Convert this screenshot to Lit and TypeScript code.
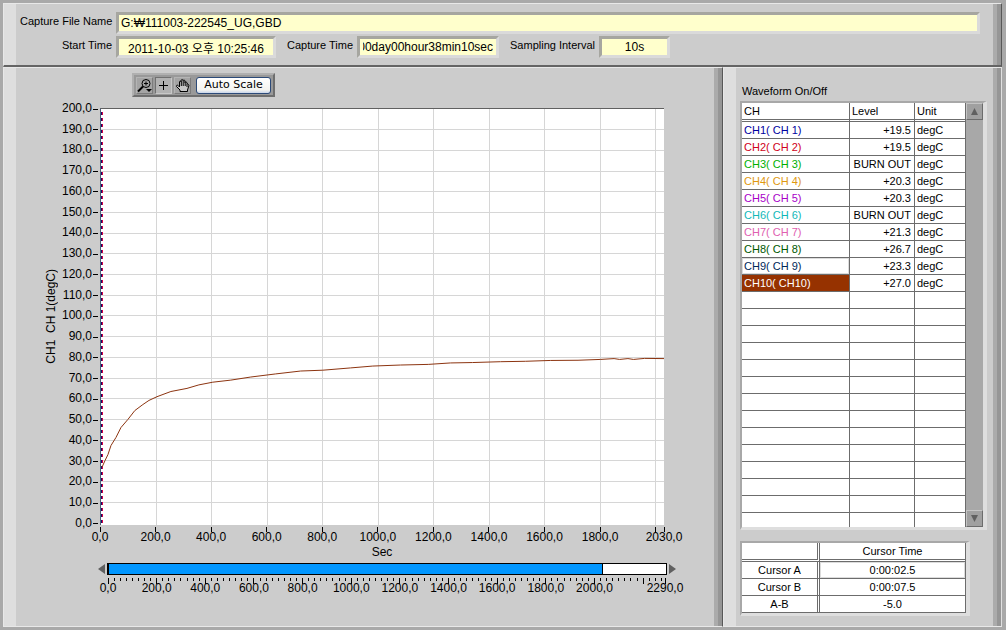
import { LitElement, html, svg, css } from "lit";
import { customElement, property, state } from "lit/decorators.js";

interface Channel {
  name: string;
  level: string;
  unit: string;
  color: string;
}

const CHANNELS: Channel[] = [
  { name: "CH1( CH 1)", level: "+19.5", unit: "degC", color: "#0000a0" },
  { name: "CH2( CH 2)", level: "+19.5", unit: "degC", color: "#d00020" },
  { name: "CH3( CH 3)", level: "BURN OUT", unit: "degC", color: "#00b000" },
  { name: "CH4( CH 4)", level: "+20.3", unit: "degC", color: "#e09810" },
  { name: "CH5( CH 5)", level: "+20.3", unit: "degC", color: "#a800c8" },
  { name: "CH6( CH 6)", level: "BURN OUT", unit: "degC", color: "#10b8b8" },
  { name: "CH7( CH 7)", level: "+21.3", unit: "degC", color: "#e060b0" },
  { name: "CH8( CH 8)", level: "+26.7", unit: "degC", color: "#005800" },
  { name: "CH9( CH 9)", level: "+23.3", unit: "degC", color: "#002858" },
  { name: "CH10( CH10)", level: "+27.0", unit: "degC", color: "#ffffff" },
];

const TEMPERATURE: [number, number][] = [
  [4, 27], [14, 30], [25, 33], [36, 37.4], [54, 41.3], [72, 46.1], [97, 50],
  [122, 54.3], [151, 57.2], [173, 59.2], [202, 61], [252, 63.5], [310, 65],
  [353, 66.7], [403, 68], [468, 69], [540, 70.5], [630, 72], [720, 73.4],
  [800, 73.8], [900, 74.9], [980, 75.8], [1080, 76.3], [1180, 76.6],
  [1260, 77.3], [1340, 77.5], [1440, 77.9], [1530, 78.1], [1620, 78.5],
  [1720, 78.6], [1800, 79], [1850, 79.4], [1870, 79], [1900, 79.4],
  [1920, 79], [1960, 79.5], [2030, 79.4],
];

const VIEW_END = 2030;
const RECORD_END = 2290;
const Y_MIN = -1;
const Y_MAX = 200;

const fmt = (n: number) => `${n},0`;
const range = (from: number, to: number, step: number) => {
  const out: number[] = [];
  for (let v = from; v <= to; v += step) out.push(v);
  return out;
};
const xPct = (sec: number, end: number) => `${(sec / end) * 100}%`;
const yPct = (v: number) => `${((Y_MAX - v) / (Y_MAX - Y_MIN)) * 100}%`;

@customElement("capture-header")
class CaptureHeader extends LitElement {
  static styles = css`
    :host {
      display: block;
      padding: 7px 13px 6px 4px;
    }
    .row {
      display: flex;
      align-items: center;
      height: 24px;
    }
    label {
      font-size: 11px;
      white-space: nowrap;
      margin-right: 4px;
      padding-bottom: 4px;
    }
    .lead {
      width: 92px;
      text-align: right;
    }
    .gap {
      margin-left: 11px;
    }
    input {
      box-sizing: border-box;
      min-width: 0;
      height: 22px;
      border: 3px solid;
      border-color: #a6a6a0 #dadada #dadada #a6a6a0;
      background: #ffffcc;
      font: 12px "Liberation Sans", "Noto Sans CJK KR", sans-serif;
      color: #000;
      padding: 0 2px;
      outline: none;
    }
    .file {
      flex: 1;
    }
    .start {
      width: 160px;
      text-align: center;
    }
    .span {
      width: 142px;
      padding: 0 3px;
      direction: rtl;
    }
    .interval {
      width: 71px;
      text-align: center;
    }
  `;

  render() {
    return html`
      <div class="row">
        <label class="lead" for="file">Capture File Name</label>
        <input class="file" id="file" readonly value="G:₩111003-222545_UG,GBD" />
      </div>
      <div class="row">
        <label class="lead" for="start">Start Time</label>
        <input class="start" id="start" readonly value="2011-10-03 오후 10:25:46" />
        <label class="gap" for="span">Capture Time</label>
        <input class="span" id="span" readonly value="00day00hour38min10sec" />
        <label class="gap" for="interval">Sampling Interval</label>
        <input class="interval" id="interval" readonly value="10s" />
      </div>
    `;
  }
}

@customElement("graph-toolbar")
class GraphToolbar extends LitElement {
  static styles = css`
    :host {
      display: flex;
      align-items: center;
      gap: 2px;
      height: 20px;
      padding: 0 2px;
      background: #999;
      border: 2px solid;
      border-color: #b0b0b0 #6e6e6e #6e6e6e #b0b0b0;
    }
    .tool {
      box-sizing: border-box;
      width: 17px;
      height: 17px;
      padding: 0;
      border: 1px solid;
      border-color: #b4b4b4 #7c7c7c #7c7c7c #b4b4b4;
      background: #a4a4a4;
    }
    .pressed {
      border-color: #707070 #c8c8c8 #c8c8c8 #707070;
      background: #b2b2b2;
    }
    .tool svg {
      display: block;
      width: 15px;
      height: 15px;
    }
    .scale {
      box-sizing: border-box;
      width: 75px;
      height: 17px;
      margin-left: 3px;
      padding: 0;
      border: 1px solid #2c4a78;
      border-radius: 3px;
      background: linear-gradient(#fff, #f4f4f0 80%, #c8d4e8);
      font: 11px/14px "DejaVu Sans", sans-serif;
      color: #000;
      white-space: nowrap;
    }
  `;

  render() {
    return html`
      <button class="tool" aria-label="Zoom">
        <svg viewBox="0 0 15 15" fill="none" stroke="#000">
          <circle cx="9" cy="5.5" r="4" />
          <path d="M7 5.5h4M9 3.5v4" />
          <path d="M6 8.5L1 13.5" stroke-width="2" />
          <path d="M9 11h6l-3 3z" fill="#000" stroke="none" />
        </svg>
      </button>
      <button class="tool pressed" aria-label="Cursor">
        <svg viewBox="0 0 15 15" stroke="#000"><path d="M3 7.5h9M7.5 3v9" /></svg>
      </button>
      <button class="tool" aria-label="Pan">
        <svg viewBox="0 0 15 15" fill="#c8c8c8" stroke="#000" stroke-linejoin="round">
          <path
            d="M5 13.5V12L1.5 8.5c-.4-1.200.8-1.700 1.600-1L4.500 9V4c0-1.200 1.600-1.200 1.700 0V2.500c0-1.300 1.800-1.300 1.800 0V2.800c.2-1.200 1.900-1.100 1.900.2V4.500c.3-1.200 1.900-1 1.900.3L13 6.500c.6 0 1 .4.900 1.200L12.500 12v1.500z"
          />
          <path d="M6.300 4v4M8.200 3v5M10.200 4v4M12 5.500V9" fill="none" />
        </svg>
      </button>
      <button class="scale">Auto Scale</button>
    `;
  }
}

@customElement("wave-graph")
class WaveGraph extends LitElement {
  @state() private position = 2030;

  static styles = css`
    :host {
      flex: 1;
      display: grid;
      grid-template-columns: 17px 39px 1fr;
      grid-template-rows: minmax(200px, 1fr) 20px 16px 16px 20px;
      min-height: 0;
    }
    svg {
      display: block;
      width: 100%;
      height: 100%;
      overflow: visible;
    }
    text {
      font: 12px "Liberation Sans", sans-serif;
      fill: #000;
    }
    .mid {
      text-anchor: middle;
    }
    .end {
      text-anchor: end;
    }
    .tick {
      stroke: #000;
      shape-rendering: crispEdges;
    }
    .title {
      writing-mode: vertical-rl;
      transform: rotate(180deg);
      align-self: center;
      font-size: 12px;
      line-height: 14px;
      white-space: pre;
    }
    .plot {
      box-sizing: border-box;
      min-height: 0;
      background: #fff;
      border-top: 1px solid #606060;
      border-left: 1px solid #506078;
    }
    .line {
      stroke: #d6d6d6;
      shape-rendering: crispEdges;
    }
    .wave {
      fill: none;
      stroke: #8c3410;
      vector-effect: non-scaling-stroke;
    }
    .cursor {
      stroke-dasharray: 3 3;
    }
    .a {
      stroke: #d80040;
    }
    .b {
      stroke: #180868;
    }
    .x,
    .unit,
    .scale {
      grid-column: 3;
    }
    .unit {
      text-align: center;
      font-size: 12px;
      line-height: 15px;
    }
    .slider {
      grid-column: 3;
      display: flex;
      align-items: center;
      justify-content: center;
      margin: 0 -12px 0 -2px;
      gap: 2px;
    }
    .arrow {
      flex: none;
      width: 7px;
      height: 10px;
      padding: 0;
      border: 0;
      background: none;
    }
    input {
      flex: 1;
      min-width: 0;
      appearance: none;
      box-sizing: border-box;
      height: 12px;
      margin: 0;
      border: 1px solid #000;
      border-left-width: 2px;
      background-color: #fff;
      background-image: linear-gradient(#0096ff, #0096ff);
      background-repeat: no-repeat;
    }
    input::-webkit-slider-thumb {
      appearance: none;
      width: 1px;
      height: 10px;
      background: #000;
    }
    .scale {
      margin: 0 -1px 0 8px;
    }
  `;

  render() {
    const temps = range(0, 200, 10);
    const secs = range(0, 2000, 200);
    const points = TEMPERATURE.map(([s, t]) => `${s},${Y_MAX - t}`).join(" ");
    return html`
      <div class="title">CH1  CH 1(degC)</div>
      <svg aria-label="Temperature scale">
        ${temps.map(
          (t) => svg`
            <svg y=${yPct(t)} overflow="visible">
              <line class="tick" x1="32" x2="37" y1="1" y2="1"></line>
              <text class="end" x="31" y="4">${fmt(t)}</text>
            </svg>`,
        )}
      </svg>
      <div class="plot">
        <svg>
          ${secs.slice(1).map(
            (s) => svg`<line class="line" x1=${xPct(s, VIEW_END)} x2=${xPct(s, VIEW_END)} y1="0" y2="100%"></line>`,
          )}
          ${temps.slice(1, -1).map(
            (t) => svg`<line class="line" x1="0" x2="100%" y1=${yPct(t)} y2=${yPct(t)}></line>`,
          )}
          <line class="cursor b" x1="0.5" x2="0.5" y1="3" y2="100%"></line>
          <line class="cursor a" x1="1.5" x2="1.5" y1="3" y2="100%"></line>
          <svg viewBox="0 0 ${VIEW_END} ${Y_MAX - Y_MIN}" preserveAspectRatio="none">
            <polyline class="wave" points=${points}></polyline>
          </svg>
        </svg>
      </div>
      <div class="x">
        <svg>
          ${[...secs, VIEW_END].map(
            (s) => svg`
              <line class="tick" x1=${xPct(s, VIEW_END)} x2=${xPct(s, VIEW_END)} y1="2" y2="7"></line>
              ${s === 2000 ? null : svg`<text class="mid" x=${xPct(s, VIEW_END)} y="16">${fmt(s)}</text>`}`,
          )}
        </svg>
      </div>
      <div class="unit">Sec</div>
      <div class="slider">
        <button class="arrow" aria-label="Scroll left" @click=${() => this.move(-10)}>
          <svg viewBox="0 0 7 10"><path d="M7 0v10L0 5z" fill="#606060" /></svg>
        </button>
        <input
          type="range"
          aria-label="Display position"
          min="0"
          max=${RECORD_END}
          .value=${String(this.position)}
          style="background-size:${(this.position / RECORD_END) * 100}% 100%"
          @input=${(e: Event) => (this.position = Number((e.target as HTMLInputElement).value))}
        />
        <button class="arrow" aria-label="Scroll right" @click=${() => this.move(10)}>
          <svg viewBox="0 0 7 10"><path d="M0 0v10l7-5z" fill="#606060" /></svg>
        </button>
      </div>
      <div class="scale">
        <svg>
          ${[...range(0, RECORD_END, 25), RECORD_END].map((s) => {
            const major = s % 200 === 0 || s === RECORD_END;
            return svg`
              <line class="tick" x1=${xPct(s, RECORD_END)} x2=${xPct(s, RECORD_END)} y1="1" y2=${major ? 7 : 4}></line>
              ${major && s !== 2200
                ? svg`<text class="mid" x=${xPct(s, RECORD_END)} y="15">${fmt(s)}</text>`
                : null}`;
          })}
        </svg>
      </div>
    `;
  }

  private move(step: number) {
    this.position = Math.min(RECORD_END, Math.max(0, this.position + step));
  }
}

@customElement("channel-table")
class ChannelTable extends LitElement {
  @property({ attribute: false }) channels: Channel[] = [];
  @state() private selected = 9;

  static styles = css`
    :host {
      flex: 1;
      display: flex;
      min-height: 0;
      border: 2px solid;
      border-color: #a8a8a8 #dedede #dedede #a8a8a8;
      border-right-width: 4px;
      border-bottom-width: 3px;
    }
    .rows {
      flex: 1;
      overflow: hidden;
      background: #fff;
    }
    table {
      width: 100%;
      table-layout: fixed;
      border-collapse: separate;
      border-spacing: 0;
    }
    .ch {
      width: 108px;
    }
    .level {
      width: 65px;
    }
    th,
    td {
      box-sizing: border-box;
      height: 17px;
      padding: 0 2px;
      border-right: 1px solid #6c6c6c;
      border-bottom: 1px solid #6c6c6c;
      font-size: 11px;
      font-weight: 400;
      line-height: 16px;
      text-align: left;
      white-space: nowrap;
    }
    th {
      height: 19px;
      border-bottom: 3px double #6c6c6c;
    }
    .num {
      text-align: right;
      padding-right: 3px;
    }
    .selected {
      background: #963200;
    }
    .focus {
      box-shadow: inset 0 0 0 1px #dcdcdc;
    }
    .bar {
      display: flex;
      flex-direction: column;
      justify-content: space-between;
      width: 17px;
      background: #a8a8a8;
    }
    button {
      box-sizing: border-box;
      width: 17px;
      height: 17px;
      padding: 0;
      border: 1px solid;
      border-color: #c4c4c4 #6c6c6c #6c6c6c #c4c4c4;
      background: #a0a0a0;
    }
    svg {
      display: block;
      width: 15px;
      height: 15px;
    }
  `;

  render() {
    const blanks = Array.from({ length: 14 });
    return html`
      <div class="rows">
        <table>
          <thead>
            <tr>
              <th class="ch">CH</th>
              <th class="level">Level</th>
              <th>Unit</th>
            </tr>
          </thead>
          <tbody>
            ${this.channels.map(
              (c, i) => html`
                <tr @click=${() => (this.selected = i)}>
                  <td
                    class=${i === this.selected ? "selected" : i === 8 ? "focus" : ""}
                    style="color:${c.color}"
                  >${c.name}</td>
                  <td class="num">${c.level}</td>
                  <td>${c.unit}</td>
                </tr>
              `,
            )}
            ${blanks.map(() => html`<tr><td></td><td></td><td></td></tr>`)}
          </tbody>
        </table>
      </div>
      <div class="bar">
        <button aria-label="Scroll up">
          <svg viewBox="0 0 15 15"><path d="M7.500 4l3.500 7H4z" fill="#606060" /></svg>
        </button>
        <button aria-label="Scroll down">
          <svg viewBox="0 0 15 15"><path d="M7.500 11L4 4h7z" fill="#606060" /></svg>
        </button>
      </div>
    `;
  }
}

@customElement("cursor-table")
class CursorTable extends LitElement {
  static styles = css`
    :host {
      display: block;
      margin-right: 17px;
      border: 2px solid;
      border-color: #a8a8a8 #dedede #dedede #a8a8a8;
      border-right-width: 4px;
      border-bottom-width: 3px;
    }
    table {
      width: 100%;
      table-layout: fixed;
      border-collapse: separate;
      border-spacing: 0;
      background: #fff;
    }
    th,
    td {
      box-sizing: border-box;
      height: 17px;
      padding: 0;
      border-right: 1px solid #6c6c6c;
      border-bottom: 1px solid #6c6c6c;
      font-size: 11px;
      font-weight: 400;
      line-height: 16px;
      text-align: center;
    }
    .name {
      width: 78px;
      border-right: 3px double #6c6c6c;
    }
    .head {
      height: 19px;
      border-bottom: 3px double #6c6c6c;
    }
    .focus {
      box-shadow: inset 0 0 0 1px #dcdcdc;
    }
  `;

  render() {
    return html`
      <table>
        <thead>
          <tr><td class="name head"></td><th class="head">Cursor Time</th></tr>
        </thead>
        <tbody>
          <tr><th class="name">Cursor A</th><td class="focus">0:00:02.5</td></tr>
          <tr><th class="name">Cursor B</th><td>0:00:07.5</td></tr>
          <tr><th class="name">A-B</th><td>-5.0</td></tr>
        </tbody>
      </table>
    `;
  }
}

@customElement("app-root")
class AppRoot extends LitElement {
  static styles = css`
    :host {
      box-sizing: border-box;
      display: flex;
      flex-direction: column;
      height: 100vh;
      min-height: 480px;
      padding: 3px 4px 3px 3px;
      background: #a9a9a9;
      color: #000;
      font-family: "Liberation Sans", "Noto Sans CJK KR", sans-serif;
    }
    .panel {
      box-sizing: border-box;
      min-height: 0;
      border: 1px solid #e8e8e8;
      border-right: 1px solid #585858;
      background: #ccc;
      display: flex;
    }
    .panel::before {
      content: "";
      width: 12px;
      background: #dedede;
    }
    .panel::after {
      content: "";
      width: 8px;
      background: linear-gradient(90deg, #ababab 50%, #969696 50%);
    }
    .top {
      flex: none;
      border-bottom: 2px solid #646464;
    }
    .top capture-header {
      flex: 1;
    }
    .body {
      flex: 1;
      display: flex;
      min-height: 0;
    }
    .graph {
      flex: 1;
      min-width: 0;
    }
    .side {
      flex: none;
      width: 279px;
      border-right-color: #e0e0e0;
    }
    .content {
      flex: 1;
      min-width: 0;
      min-height: 0;
      display: flex;
      flex-direction: column;
    }
    .chart {
      padding: 5px 50px 29px 28px;
    }
    .tools {
      display: flex;
      padding-left: 88px;
      margin-bottom: 11px;
    }
    .lists {
      padding: 16px 6px 10px 4px;
    }
    .caption {
      margin: 0 0 3px 2px;
      font-size: 11px;
      font-weight: 400;
      line-height: 14px;
    }
    cursor-table {
      flex: none;
      margin-top: 11px;
    }
  `;

  render() {
    return html`
      <header class="panel top"><capture-header></capture-header></header>
      <main class="body">
        <section class="panel graph">
          <div class="content chart">
            <div class="tools"><graph-toolbar></graph-toolbar></div>
            <wave-graph></wave-graph>
          </div>
        </section>
        <section class="panel side">
          <div class="content lists">
            <h2 class="caption">Waveform On/Off</h2>
            <channel-table .channels=${CHANNELS}></channel-table>
            <cursor-table></cursor-table>
          </div>
        </section>
      </main>
    `;
  }
}
